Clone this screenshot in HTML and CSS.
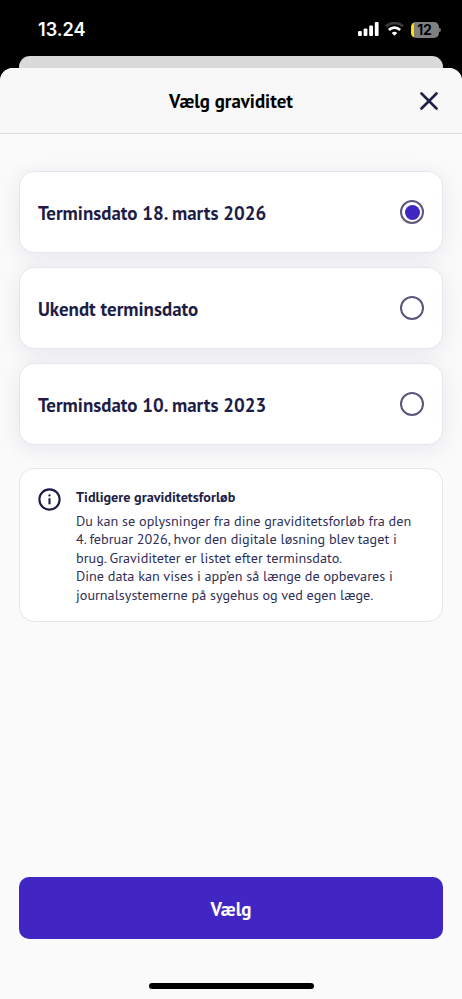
FILE: index.html
```html
<!DOCTYPE html>
<html lang="da">
<head>
<meta charset="utf-8">
<meta name="viewport" content="width=device-width, initial-scale=1">
<title>Vælg graviditet</title>
<link rel="stylesheet" href="styles.css">
</head>
<body>
<div class="screen">
  <header class="status">
    <span class="clock">13.24</span>
    <div class="indicators">
      <svg class="signal" width="21" height="14" viewBox="0 0 21 14" fill="#fff">
        <rect x="0" y="9" width="3.8" height="5" rx="1"/>
        <rect x="5.6" y="6.5" width="3.8" height="7.5" rx="1"/>
        <rect x="11.2" y="3.5" width="3.8" height="10.5" rx="1"/>
        <rect x="16.8" y="0" width="3.8" height="14" rx="1"/>
      </svg>
      <svg class="wifi" width="19" height="14" viewBox="0 0 19 14" fill="none">
        <path d="M1 4.3a12.6 12.6 0 0 1 17 0" stroke="#3c3c3c" stroke-width="2.7"/>
        <path d="M3.9 7.9a8.2 8.2 0 0 1 11.2 0" stroke="#fff" stroke-width="2.8"/>
        <path d="M9.5 13.8 6.7 11a4.1 4.1 0 0 1 5.6 0z" fill="#fff"/>
      </svg>
      <div class="battery"><span class="level">12</span><i class="tip"></i></div>
    </div>
  </header>
  <div class="behind"></div>
  <main class="sheet">
    <div class="bar">
      <h1>Vælg graviditet</h1>
      <svg class="close" width="18" height="18" viewBox="0 0 18 18"><path d="M1.5 1.5l15 15M16.5 1.5l-15 15" stroke="#1f1f49" stroke-width="2.6" stroke-linecap="round"/></svg>
    </div>
    <div class="content">
      <div class="option"><span class="label">Terminsdato 18. marts 2026</span><span class="radio on"></span></div>
      <div class="option"><span class="label">Ukendt terminsdato</span><span class="radio"></span></div>
      <div class="option"><span class="label">Terminsdato 10. marts 2023</span><span class="radio"></span></div>
      <section class="info">
        <svg class="info-icon" width="23" height="23" viewBox="0 0 23 23" fill="none"><circle cx="11.5" cy="11.5" r="10.1" stroke="#1b1a44" stroke-width="2.1"/><circle cx="11.5" cy="7.4" r="1.15" fill="#1b1a44"/><path d="M11.5 10.3v6" stroke="#1b1a44" stroke-width="2.1"/></svg>
        <div class="info-text">
          <h2>Tidligere graviditetsforløb</h2>
          <p>Du kan se oplysninger fra dine graviditetsforløb fra den<br>4. februar 2026, hvor den digitale løsning blev taget i<br>brug. Graviditeter er listet efter terminsdato.<br>Dine data kan vises i app’en så længe de opbevares i<br>journalsystemerne på sygehus og ved egen læge.</p>
        </div>
      </section>
    </div>
    <button class="submit">Vælg</button>
    <div class="home"></div>
  </main>
</div>
</body>
</html>
```
FILE: styles.css
```css
* { box-sizing: border-box; }
body { margin: 0; background: #000; font-family: "PT Sans", "Noto Sans", sans-serif; color: #1e1d46; }
.screen { height: 999px; display: flex; flex-direction: column; overflow: hidden; }
.status { height: 56px; flex: none; display: flex; justify-content: space-between; padding: 20px 23.5px 0 38px; color: #fff; }
.clock { font: 600 18.1px/19px Inter, sans-serif; }
.indicators { display: flex; gap: 6.5px; padding-top: 2px; height: 18px; align-items: flex-start; }
.battery { width: 28px; height: 16px; margin-top: -0.5px; border-radius: 5px; background: linear-gradient(90deg, #fd0 3.5px, #808080 3.5px); position: relative; color: #000; font: 700 14px/15px Inter, sans-serif; letter-spacing: -0.2px; text-align: center; }
.tip { position: absolute; left: 28.5px; top: 6px; width: 2px; height: 4px; border-radius: 0 2px 2px 0; background: #777; }
.behind { height: 24px; flex: none; margin: 0 19px -12.5px; border-radius: 11px 11px 0 0; background: #dadada; }
.sheet { flex: 1; background: #fafafa; border-radius: 13px 13px 0 0; display: flex; flex-direction: column; overflow: hidden; z-index: 1; }
.bar { height: 66.5px; flex: none; background: #f8f8f8; border-bottom: 1px solid #dedee0; display: grid; grid-template-columns: 40px 1fr 40px; align-items: center; padding-top: 1.2px; }
h1 { grid-column: 2; margin: 0; text-align: center; font-size: 18.9px; line-height: 24px; font-weight: 700; color: #000; white-space: nowrap; }
.close { margin-left: -2px; }
.content { padding: 37.2px 19px 0; display: flex; flex-direction: column; gap: 14px; }
.option { height: 82px; background: #fff; border: 1px solid #e7e6ee; border-radius: 15px; box-shadow: 0 4px 20px rgba(45, 35, 110, .09); padding: 0 18px; display: flex; align-items: center; justify-content: space-between; }
.label { font-size: 18.95px; line-height: 24px; font-weight: 700; white-space: nowrap; padding-top: 1px; }
.radio { width: 24px; height: 24px; border: 2.4px solid #5b587e; border-radius: 50%; display: grid; place-items: center; }
.on::after { content: ""; width: 15px; height: 15px; border-radius: 50%; background: #4126c3; }
.info { margin-top: 9px; height: 153.5px; background: #fff; border: 1px solid #e6e6ea; border-radius: 15px; padding: 18.8px 18px 0; display: flex; gap: 15px; }
.info-icon { flex: none; }
h2 { margin: 0 0 4.6px; font-size: 14.2px; line-height: 19px; font-weight: 700; white-space: nowrap; }
p { margin: 0; font-size: 14.2px; line-height: 18.5px; white-space: nowrap; color: #302f57; }
.submit { margin: auto 19px 0; height: 62.5px; flex: none; border: 0; border-radius: 10px; background: #4126c3; color: #fff; font: 700 18.95px/24px "PT Sans", "Noto Sans", sans-serif; padding: 1.5px 0 0; }
.home { width: 165px; height: 6px; flex: none; border-radius: 3px; background: #000; margin: 44px auto 9.6px; }
```
